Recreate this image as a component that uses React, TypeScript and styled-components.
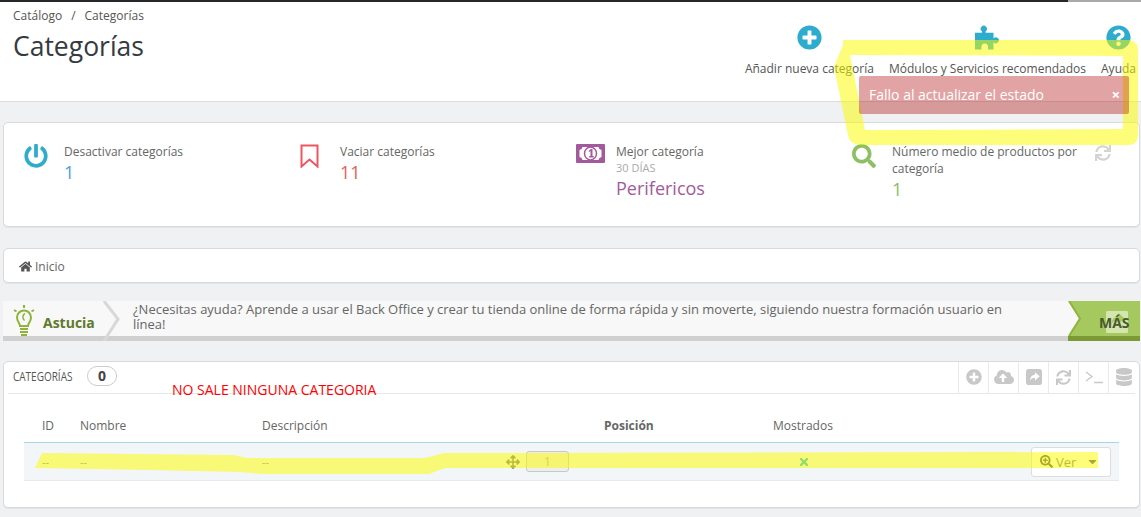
import styled, { createGlobalStyle } from 'styled-components';
import {
  FaArrowsAlt,
  FaCaretDown,
  FaCloudUploadAlt,
  FaDatabase,
  FaHome,
  FaPlusCircle,
  FaPowerOff,
  FaQuestionCircle,
  FaSearch,
  FaSearchPlus,
  FaSync,
  FaTimes,
} from 'react-icons/fa';

const GlobalStyle = createGlobalStyle`
  html, body {
    margin: 0;
    padding: 0;
    background: #eff1f2;
  }
  * {
    box-sizing: border-box;
  }
`;

const Page = styled.div`
  position: relative;
  width: 1141px;
  height: 517px;
  overflow: hidden;
  background: #eff1f2;
  color: #666;
  font-family: 'Open Sans', 'Liberation Sans', sans-serif;
  font-size: 12px;
`;

const TopLine = styled.div`
  height: 2px;
  background: linear-gradient(to right, #25282a 1068px, #a9a9a9 1068px);
`;

const Header = styled.header`
  display: flex;
  justify-content: space-between;
  height: 100px;
  padding: 0 5px 0 13px;
  background: #fff;
  border-bottom: 1px solid #dcdcdc;
`;

const TitleBlock = styled.div`
  padding-top: 6px;
`;

const Crumbs = styled.div`
  display: flex;
  gap: 9px;
  font-size: 12px;
  line-height: 16px;
  color: #555;
`;

const Title = styled.h1`
  margin: 4px 0 0;
  font-size: 26.5px;
  font-weight: 400;
  line-height: 36px;
  color: #363a41;
`;

const Toolbar = styled.nav`
  display: flex;
  gap: 15px;
  padding-top: 23px;
`;

const ToolItem = styled.div`
  display: flex;
  flex-direction: column;
  align-items: center;
  gap: 10px;
  font-size: 12px;
  line-height: 18px;
  color: #555;
  svg {
    display: block;
    width: 25px;
    height: 25px;
    color: #2eacce;
  }
`;

const Card = styled.section`
  margin: 0 1px 0 3px;
  background: #fff;
  border: 1px solid #d9dadb;
  border-radius: 5px;
  box-shadow: 0 1px 0 #e2e3e4;
`;

const Kpis = styled(Card)`
  display: grid;
  grid-template-columns: repeat(4, 276px);
  height: 105px;
  margin-top: 20px;
  padding: 20px 0 0 20px;
`;

const Kpi = styled.div`
  position: relative;
  display: flex;
`;

const KpiIcon = styled.div<{ $color: string }>`
  flex: 0 0 40px;
  padding-top: 1px;
  color: ${(p) => p.$color};
  svg {
    display: block;
  }
`;

const KpiText = styled.div`
  width: 200px;
`;

const KpiLabel = styled.div`
  font-size: 12px;
  line-height: 17px;
  color: #666;
`;

const KpiSub = styled.div`
  font-size: 11px;
  line-height: 16px;
  color: #aaa;
`;

const KpiValue = styled.div<{ $color: string }>`
  font-size: 18px;
  line-height: 25px;
  color: ${(p) => p.$color};
`;

const KpiRefresh = styled.div`
  position: absolute;
  top: 2px;
  left: 243px;
  color: #d4d4d4;
  svg {
    display: block;
  }
`;

const Path = styled(Card)`
  display: flex;
  align-items: center;
  gap: 3px;
  height: 35px;
  margin-top: 21px;
  padding: 1px 0 0 15px;
  font-size: 12px;
  color: #666;
  svg {
    color: #555;
  }
`;

const Tip = styled.div`
  position: relative;
  display: flex;
  height: 40px;
  margin: 18px 1px 0 3px;
  background: #f8f8f8;
  border-bottom: 5px solid #d0d0d0;
`;

const TipLabel = styled.div`
  display: flex;
  flex: 0 0 130px;
  align-items: flex-end;
  gap: 8px;
  padding: 0 0 3px 10px;
  font-size: 14px;
  font-weight: 700;
  line-height: 20px;
  color: #5e7a2a;
  svg {
    display: block;
    margin-bottom: -3px;
  }
`;

const TipChevron = styled.svg`
  position: absolute;
  top: 0;
  left: 100px;
`;

const TipText = styled.p`
  flex: 0 0 890px;
  margin: 0;
  padding-top: 1px;
  font-size: 13px;
  line-height: 15px;
  color: #666;
`;

const More = styled.div`
  position: relative;
  flex: 1;
  margin: 0 0 -5px 45px;
  background: #a5c85f;
  border-bottom: 5px solid #7a9a34;
  font-size: 14px;
  font-weight: 700;
  color: #4a5a2c;
`;

const MoreNotch = styled.svg`
  position: absolute;
  top: 0;
  left: 0;
`;

const MoreIcon = styled.svg`
  position: absolute;
  top: 10px;
  left: 38px;
`;

const MoreText = styled.span`
  position: absolute;
  top: 12px;
  left: 31px;
`;

const Panel = styled(Card)`
  height: 147px;
  margin-top: 20px;
  padding: 0 4px 0 4px;
`;

const PanelHead = styled.div`
  display: flex;
  align-items: stretch;
  justify-content: space-between;
  height: 32px;
  border-bottom: 1px solid #e8e8e8;
`;

const PanelTitle = styled.div`
  display: flex;
  align-items: center;
  gap: 9px;
  padding: 0 0 3px 5px;
  font-size: 13.5px;
  color: #555;
`;

const Narrow = styled.span`
  display: inline-block;
  transform: scaleX(0.74);
  transform-origin: left center;
  width: 65px;
  white-space: nowrap;
`;

const Count = styled.span`
  width: 30px;
  height: 20px;
  border: 1px solid #ccc;
  border-radius: 10px;
  font-size: 14px;
  font-weight: 700;
  line-height: 17px;
  text-align: center;
  color: #444;
`;

const PanelTools = styled.div`
  display: flex;
  margin-right: -3px;
`;

const PanelTool = styled.div`
  display: flex;
  align-items: center;
  justify-content: center;
  width: 30px;
  padding-bottom: 1px;
  border-left: 1px solid #eaeaea;
  color: #c8c8c8;
`;

const TableWrap = styled.div`
  margin: 22px 16px 0 16px;
`;

const Row = styled.div`
  display: grid;
  grid-template-columns: 38px 182px 244px 98px 169px 60px 1fr;
  align-items: center;
  padding: 0 7px 0 18px;
`;

const HeadRow = styled(Row)`
  height: 27px;
  padding-bottom: 8px;
  border-bottom: 1px solid #a3d6ea;
  font-size: 12px;
  color: #666;
`;

const BodyRow = styled(Row)`
  height: 38px;
  background: #f3f6f9;
  border-bottom: 1px solid #e6e8ea;
  font-size: 11px;
  color: #888;
`;

const Strong = styled.span`
  font-weight: 700;
`;

const PositionCell = styled.div`
  display: flex;
  align-items: center;
  gap: 6px;
  grid-column: span 2;
  color: #777;
`;

const PositionInput = styled.div`
  width: 43px;
  height: 21px;
  background: #eee;
  border: 1px solid #c8c8c8;
  border-radius: 3px;
  font-size: 12px;
  line-height: 19px;
  text-align: center;
  color: #aaa;
`;

const Status = styled.div`
  display: flex;
  justify-content: center;
  padding-left: 1px;
  color: #1cbbe0;
`;

const ViewButton = styled.div`
  display: flex;
  align-items: center;
  justify-self: end;
  width: 80px;
  height: 30px;
  margin-right: 1px;
  padding: 0 11px 0 8px;
  background: #fff;
  border: 1px solid #ddd;
  border-radius: 3px;
  font-size: 13px;
  color: #777;
  svg:first-child {
    color: #555;
    margin-right: 3px;
  }
  svg:last-child {
    margin-left: auto;
    color: #504a70;
  }
`;

const Annotation = styled.div`
  position: absolute;
  top: 381px;
  left: 172px;
  font-size: 14px;
  line-height: 18px;
  color: #f00;
`;

const Marker = styled.svg`
  position: absolute;
  top: 0;
  left: 0;
  pointer-events: none;
`;

const Toast = styled.div`
  position: absolute;
  top: 76px;
  left: 859px;
  display: flex;
  align-items: center;
  justify-content: space-between;
  width: 270px;
  height: 38px;
  padding: 0 9px 2px 10px;
  background: rgba(172, 0, 0, 0.36);
  border-radius: 2px;
  font-size: 14px;
  color: #fff;
`;

const ToastClose = styled.span`
  font-size: 15px;
  font-weight: 700;
`;

const PuzzleIcon = () => (
  <svg viewBox='0 0 27 26'>
    <path
      fill='currentColor'
      fillRule='evenodd'
      d='M0 8h7.5V6.2a3.3 3.3 0 1 1 4 0V8H20v6.2a3.2 3.2 0 1 1 0 3.8V26h-6v-2.2a3.6 3.6 0 1 0-7 0V26H0z'
    />
  </svg>
);

const BookmarkIcon = () => (
  <svg width='19' height='24' viewBox='0 0 19 24' fill='none' stroke='currentColor'>
    <path strokeWidth='2' d='M1.500 1.500h16v21l-8-7-8 7z' />
  </svg>
);

const MoneyIcon = () => (
  <svg width='29' height='19' viewBox='0 0 29 19'>
    <rect width='29' height='19' rx='1' fill='#a35a9c' />
    <path
      fill='#fff'
      d='M6.500 3h16a3.500 3.500 0 0 0 3 3v7a3.500 3.500 0 0 0-3 3h-16a3.500 3.500 0 0 0-3-3V6a3.500 3.500 0 0 0 3-3z'
    />
    <ellipse cx='14.500' cy='9.500' rx='6' ry='6.500' fill='none' stroke='#a35a9c' strokeWidth='1.500' />
    <path fill='#a35a9c' d='M12.500 7l2.500-2h1.500v7h1.200v1.500h-4.500V12h1.300V7l-1.300 1z' />
  </svg>
);

const ShareIcon = ({ size = 17, fill = '#c8c8c8', cut = '#fff' }) => (
  <svg width={size} height={size} viewBox='0 0 17 17'>
    <rect width='17' height='17' rx='3' fill={fill} />
    <path
      fill={cut}
      d='M9.500 3.500l5 4.300-5 4.300V9.400c-2.600 0-4.200.8-5.300 3 .1-3.800 2-6 5.300-6.200z'
    />
  </svg>
);

const BulbIcon = () => (
  <svg width='22' height='31' viewBox='0 0 22 31' fill='none' stroke='#8fb33c'>
    <path
      strokeWidth='2'
      d='M7 21c0-3-3-4.500-3-8.500a7 7 0 0 1 14 0c0 4-3 5.500-3 8.500z'
    />
    <path strokeWidth='1.500' d='M12 8.500c-2.500 1-3 5-.5 7' />
    <path
      strokeWidth='2'
      d='M11 0v3M1 5l2.500 1.500M21 5l-2.500 1.500M7 24h8M7 27h8M8 30h6'
    />
  </svg>
);

const TerminalIcon = () => (
  <svg width='18' height='14' viewBox='0 0 18 14' fill='none' stroke='#c8c8c8'>
    <path strokeWidth='1.300' d='M1 2l6 4.500L1 11M9 12.500h9' />
  </svg>
);

const columns = ['ID', 'Nombre', 'Descripción'];

export default function App() {
  return (
    <Page>
      <GlobalStyle />
      <TopLine />
      <Header>
        <TitleBlock>
          <Crumbs>
            <span>Catálogo</span>
            <span>/</span>
            <span>Categorías</span>
          </Crumbs>
          <Title>Categorías</Title>
        </TitleBlock>
        <Toolbar>
          <ToolItem>
            <FaPlusCircle />
            Añadir nueva categoría
          </ToolItem>
          <ToolItem>
            <PuzzleIcon />
            Módulos y Servicios recomendados
          </ToolItem>
          <ToolItem>
            <FaQuestionCircle />
            Ayuda
          </ToolItem>
        </Toolbar>
      </Header>

      <Kpis>
        <Kpi>
          <KpiIcon $color='#2eacce'>
            <FaPowerOff size={24} />
          </KpiIcon>
          <KpiText>
            <KpiLabel>Desactivar categorías</KpiLabel>
            <KpiValue $color='#4a9fdc'>1</KpiValue>
          </KpiText>
        </Kpi>
        <Kpi>
          <KpiIcon $color='#f0565f'>
            <BookmarkIcon />
          </KpiIcon>
          <KpiText>
            <KpiLabel>Vaciar categorías</KpiLabel>
            <KpiValue $color='#e8605b'>11</KpiValue>
          </KpiText>
        </Kpi>
        <Kpi>
          <KpiIcon $color='#a35a9c'>
            <MoneyIcon />
          </KpiIcon>
          <KpiText>
            <KpiLabel>Mejor categoría</KpiLabel>
            <KpiSub>30 DÍAS</KpiSub>
            <KpiValue $color='#a35a9c'>Perifericos</KpiValue>
          </KpiText>
        </Kpi>
        <Kpi>
          <KpiIcon $color='#8cc063'>
            <FaSearch size={24} />
          </KpiIcon>
          <KpiText>
            <KpiLabel>Número medio de productos por categoría</KpiLabel>
            <KpiValue $color='#8cc063'>1</KpiValue>
          </KpiText>
          <KpiRefresh>
            <FaSync size={16} />
          </KpiRefresh>
        </Kpi>
      </Kpis>

      <Path>
        <FaHome size={13} />
        Inicio
      </Path>

      <Tip>
        <TipLabel>
          <BulbIcon />
          Astucia
        </TipLabel>
        <TipChevron width='18' height='40' viewBox='0 0 18 40' fill='none' stroke='#d8d8d8'>
          <path strokeWidth='3' d='M1 0l14 18L1 40' />
        </TipChevron>
        <TipText>
          ¿Necesitas ayuda? Aprende a usar el Back Office y crear tu tienda online de forma
          rápida y sin moverte, siguiendo nuestra formación usuario en línea!
        </TipText>
        <More>
          <MoreNotch width='16' height='35' viewBox='0 0 16 35'>
            <path fill='#f8f8f8' d='M0 0h1l11 17.500L1 35H0z' />
            <path fill='none' stroke='#8fb33c' strokeWidth='2' d='M1 0l11 17.500L1 35' />
          </MoreNotch>
          <MoreIcon width='22' height='22' viewBox='0 0 17 17'>
            <rect width='17' height='17' rx='1' fill='#d5e5b0' />
            <path fill='#a5c85f' d='M9.500 1.500l5 4.300-5 4.300V7.400c-2.600 0-4.200.8-5.300 3 .1-3.800 2-6 5.300-6.200z' />
          </MoreIcon>
          <MoreText>MÁS</MoreText>
        </More>
      </Tip>

      <Panel>
        <PanelHead>
          <PanelTitle>
            <Narrow>CATEGORÍAS</Narrow>
            <Count>0</Count>
          </PanelTitle>
          <PanelTools>
            <PanelTool>
              <FaPlusCircle size={16} />
            </PanelTool>
            <PanelTool>
              <FaCloudUploadAlt size={20} />
            </PanelTool>
            <PanelTool>
              <ShareIcon size={16} />
            </PanelTool>
            <PanelTool>
              <FaSync size={15} />
            </PanelTool>
            <PanelTool>
              <TerminalIcon />
            </PanelTool>
            <PanelTool>
              <FaDatabase size={18} />
            </PanelTool>
          </PanelTools>
        </PanelHead>
        <TableWrap>
          <HeadRow>
            {columns.map((name) => (
              <span key={name}>{name}</span>
            ))}
            <span />
            <Strong>Posición</Strong>
            <span>Mostrados</span>
          </HeadRow>
          <BodyRow>
            <span>--</span>
            <span>--</span>
            <span>--</span>
            <PositionCell>
              <FaArrowsAlt size={14} />
              <PositionInput>1</PositionInput>
            </PositionCell>
            <Status>
              <FaTimes size={12} />
            </Status>
            <ViewButton>
              <FaSearchPlus size={13} />
              Ver
              <FaCaretDown size={13} />
            </ViewButton>
          </BodyRow>
        </TableWrap>
      </Panel>

      <Annotation>NO SALE NINGUNA CATEGORIA</Annotation>

      <Marker width='1141' height='517' viewBox='0 0 1141 517'>
        <path
          fill='rgba(252, 252, 0, 0.52)'
          fillRule='evenodd'
          d='M843 40H1130q8 2 8 10V135q0 9-8 10L860 145q-11-1-12-10L834 67l9-22zM850 55l15 75 258-1V56z'
        />
        <path
          fill='rgba(252, 252, 0, 0.52)'
          d='M35 468l7-15 191 2 14 3h178l19-5 654-1v16H445l-16 6H262l-22-2-91-2z'
        />
      </Marker>

      <Toast>
        Fallo al actualizar el estado
        <ToastClose>×</ToastClose>
      </Toast>
    </Page>
  );
}
